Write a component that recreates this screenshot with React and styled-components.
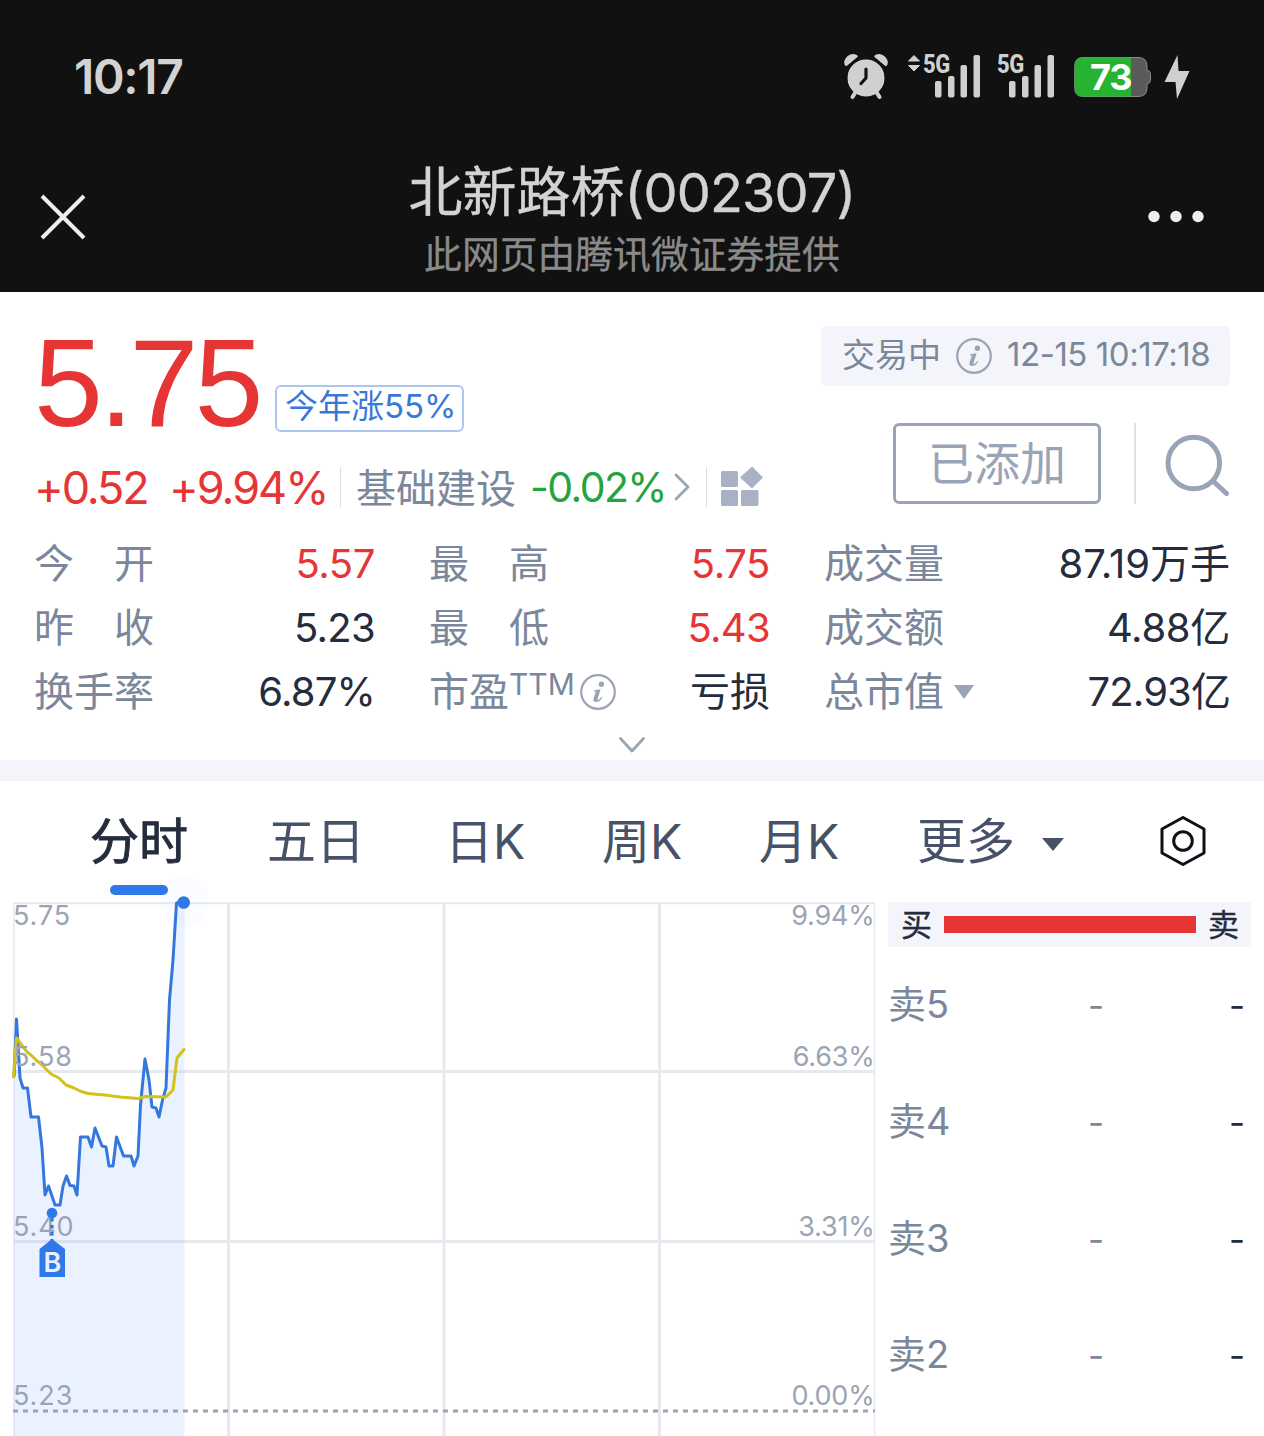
import React from 'react';
import styled, { createGlobalStyle } from 'styled-components';

const C = {
  dark: '#111111',
  ink: '#252c3d',
  label: '#7b879b',
  icon: '#9aa4b7',
  tab: '#475268',
  red: '#e63535',
  green: '#25a340',
  blue: '#2f78ea',
  tint: '#f4f5fa',
  grid: '#e8e9ee',
};

const GlobalStyle = createGlobalStyle`
  * { box-sizing: border-box; }
  body {
    margin: 0;
    background: #fff;
    font-family: Inter, 'Noto Sans CJK SC', sans-serif;
    -webkit-font-smoothing: antialiased;
  }
  svg { display: block; flex: none; }
`;

const Page = styled.div`
  width: 1264px;
  height: 1436px;
  overflow: hidden;
  background: #fff;
`;

const Text = styled.span`
  display: block;
  flex: none;
  box-sizing: content-box;
  white-space: pre;
  width: ${(p) => (p.$w ? `${p.$w}px` : 'auto')};
  margin-left: ${(p) => p.$ml || 0}px;
  padding-top: ${(p) => p.$pt || 0}px;
  padding-bottom: ${(p) => p.$pb || 0}px;
  font-size: ${(p) => p.$size}px;
  line-height: ${(p) => p.$lh || p.$size}px;
  font-weight: ${(p) => p.$weight || 400};
  letter-spacing: ${(p) => p.$ls || 0}px;
  color: ${(p) => p.$color || C.ink};
  -webkit-text-stroke: ${(p) => p.$stroke || 0}px currentColor;
`;

const Price = styled(Text)`
  font-family: 'Liberation Sans', Arial, sans-serif;
`;

const Code = styled.span`
  letter-spacing: -0.8px;
`;

/* ---------- dark header ---------- */
const DarkHeader = styled.header`
  height: 292px;
  background: ${C.dark};
`;
const StatusBar = styled.div`
  height: 152px;
  padding: 2px 74px 0;
  display: flex;
  align-items: center;
  justify-content: space-between;
`;
const NavBar = styled.div`
  height: 140px;
  padding: 0 58px 0 40px;
  display: flex;
  justify-content: space-between;
`;
const NavIcon = styled.div`
  width: 60px;
  padding-top: 42px;
`;
const Titles = styled.div`
  display: flex;
  flex-direction: column;
  align-items: center;
  padding: 11px 0 0 18px;
`;

/* ---------- quote panel ---------- */
const Quote = styled.section`
  height: 468px;
  padding: 0 34px;
`;
const QuoteTop = styled.div`
  height: 236px;
  display: flex;
  justify-content: space-between;
`;
const PriceCol = styled.div`
  padding-top: 30px;
`;
const PriceRow = styled.div`
  display: flex;
  height: 122px;
`;
const Tag = styled.div`
  width: 189px;
  height: 47px;
  margin-top: 63px;
  padding-left: 8px;
  border: 2px solid #abc6f0;
  border-radius: 6px;
`;
const ChangeRow = styled.div`
  display: flex;
  align-items: center;
  height: 86px;
`;
const Rule = styled.i`
  flex: none;
  width: ${(p) => p.$w || 1}px;
  height: ${(p) => p.$h}px;
  margin-left: ${(p) => p.$ml || 0}px;
  background: #dcdfe7;
`;
const Gap = styled.span`
  flex: none;
  width: ${(p) => p.$w}px;
`;
const ActionCol = styled.div`
  display: flex;
  flex-direction: column;
  align-items: flex-end;
  padding-top: 34px;
`;
const Session = styled.div`
  display: flex;
  align-items: center;
  width: 409px;
  height: 60px;
  padding-left: 21px;
  border-radius: 6px;
  background: ${C.tint};
`;
const Actions = styled.div`
  display: flex;
  align-items: center;
  margin-top: 37px;
`;
const Added = styled.button`
  width: 208px;
  height: 81px;
  padding: 0;
  display: flex;
  justify-content: center;
  align-items: center;
  background: transparent;
  border: 3px solid ${C.icon};
  border-radius: 6px;
  font-family: inherit;
`;
const Stats = styled.div`
  display: grid;
  grid-template-columns: 341px 341px 406px;
  column-gap: 54px;
  grid-auto-rows: 64px;
  padding-top: 4px;
`;
const Stat = styled.div`
  display: flex;
  align-items: center;
  justify-content: space-between;
`;
const StatLabel = styled.div`
  display: flex;
  align-items: center;
`;
const Expand = styled.div`
  display: flex;
  justify-content: center;
  padding-top: 12px;
`;
const Divider = styled.div`
  height: 21px;
  background: ${C.tint};
`;

/* ---------- tabs ---------- */
const Tabs = styled.nav`
  display: grid;
  grid-template-columns: 177px 178px 157px 157px 158px 243px auto;
  height: 121px;
  padding: 35px 0 0 90px;
`;
const Tab = styled.div`
  display: flex;
  flex-direction: column;
  align-items: flex-start;
`;
const Underline = styled.i`
  width: 58px;
  height: 10px;
  margin: 18px 0 0 20px;
  border-radius: 5px;
  background: ${C.blue};
`;
const MoreTab = styled.div`
  display: flex;
  align-items: flex-start;
`;

/* ---------- chart and order book ---------- */
const Market = styled.section`
  display: flex;
  height: 534px;
  padding-left: 13px;
`;
const ChartSvg = styled.svg`
  overflow: visible;
  font-family: Inter, sans-serif;
`;
const Book = styled.aside`
  width: 363px;
  margin-left: 13px;
`;
const BookHead = styled.div`
  height: 45px;
  margin-bottom: -1px;
  display: flex;
  align-items: center;
  padding-left: 13px;
  background: ${C.tint};
`;
const Ratio = styled.i`
  width: 252px;
  height: 17px;
  margin: 0 12px;
  background: ${C.red};
`;
const BookRow = styled.div`
  display: flex;
  align-items: center;
  height: 116.7px;
`;

const InfoIcon = () => (
  <svg width="36" height="36" viewBox="0 0 36 36">
    <circle cx="18" cy="18" r="16.8" fill="none" stroke={C.icon} strokeWidth="2.2" />
    <circle cx="21.4" cy="10.2" r="2.7" fill={C.icon} />
    <path d="M14 16.3 L20.6 15.2 L17.6 25 Q17.2 26.5 18.6 25.8 Q20.2 24.8 21.6 22.8 L22.4 23.4 Q19.6 28 15.8 28 Q12.6 27.8 13.5 24.6 L15.6 18.4 Q16 17 14 17.2 Z" fill={C.icon} />
  </svg>
);

const SignalBox = styled.div`
  display: flex;
  align-items: flex-start;
  width: ${(p) => p.$w}px;
  height: 46px;
`;
const Arrows = styled.div`
  width: 16px;
  flex: none;
`;
const Network = styled.span`
  flex: none;
  width: 27px;
  padding-top: 1px;
  font: 800 25px/20px Roboto, sans-serif;
  letter-spacing: -0.5px;
  color: #d0d0d0;
  transform: scaleX(0.88);
  transform-origin: 0 0;
`;
const Bars = styled.svg`
  margin-left: -15.5px;
`;

const Signal = ({ arrows, width }) => (
  <SignalBox $w={width}>
    <Arrows>
      {arrows && (
        <svg width="14" height="20" viewBox="0 0 14 20">
          <path d="M1.500 7 L7 1.500 L12.500 7 Z M1.500 11.500 L7 17 L12.500 11.500 Z" fill="#d0d0d0" stroke="#d0d0d0" strokeLinejoin="round" />
        </svg>
      )}
    </Arrows>
    <Network>5G</Network>
    <Bars width="46" height="46" viewBox="0 0 46 46" fill="#d0d0d0">
      <rect x="0" y="27" width="6.500" height="16.500" rx="2" />
      <rect x="13" y="22" width="6.500" height="21.500" rx="2" />
      <rect x="25.500" y="11" width="6.500" height="32.500" rx="2" />
      <rect x="38.500" y="1" width="6.500" height="42.500" rx="2" />
    </Bars>
  </SignalBox>
);

const StatusIcons = styled.div`
  display: flex;
  align-items: center;
`;
const Battery = styled.div`
  display: grid;
  width: 80px;
  height: 42px;
  > * { grid-area: 1 / 1; }
`;

const Status = () => (
  <StatusBar>
    <Text $size={48} $weight={600} $color="#d3d3d3" $ls={-1.3}>10:17</Text>
    <StatusIcons>
      <svg width="44" height="46" viewBox="0 0 44 46">
        <g fill="#d0d0d0">
          <circle cx="22" cy="24" r="18.700" />
          <path d="M2.200 11.300 Q.3 10 1.300 6.500 Q4 1 9 .8 Q12.500 1 13 2.500 L2.200 11.300 Z" stroke="#d0d0d0" strokeWidth="1.500" strokeLinejoin="round" />
          <path d="M41.800 11.300 Q43.700 10 42.700 6.500 Q40 1 35 .8 Q31.500 1 31 2.500 L41.800 11.300 Z" stroke="#d0d0d0" strokeWidth="1.500" strokeLinejoin="round" />
        </g>
        <circle cx="22" cy="24" r="19.700" fill="none" stroke={C.dark} strokeWidth="2" />
        <path d="M11 39 L8.500 43 M33 39 L35.500 43" stroke="#d0d0d0" strokeWidth="4" strokeLinecap="round" />
        <path d="M22 15 V24 L17 29.500" fill="none" stroke={C.dark} strokeWidth="3.200" strokeLinecap="round" strokeLinejoin="round" />
      </svg>
      <Gap $w={19} />
      <Signal arrows width={74} />
      <Signal width={76} />
      <Gap $w={17} />
      <Battery>
        <svg width="80" height="42" viewBox="0 0 80 42">
          <path d="M9 1.500 H64 Q73 1.500 73 10 V14 Q76.500 15 76.500 17.500 V24.500 Q76.500 27 73 28 V32 Q73 40.500 64 40.500 H9 Q.7 40.500 .7 32 V10 Q.7 1.500 9 1.500 Z" fill="#5b5b5b" stroke="#8a8a8a" />
          <path d="M9 1.500 H57 V40.500 H9 Q.7 40.500 .7 32 V10 Q.7 1.500 9 1.500 Z" fill="#27b332" />
        </svg>
        <Text $size={36} $lh={43} $weight={700} $color="#fff" $ml={16} $ls={-1}>73</Text>
      </Battery>
      <Gap $w={10} />
      <svg width="26" height="46" viewBox="0 0 26 46">
        <path d="M13.500 1 L.5 28 H11.500 L13 45 L25.500 17 H14.500 Z" fill="#d0d0d0" />
      </svg>
    </StatusIcons>
  </StatusBar>
);

const STATS = [
  ['今\u3000开', '5.57', C.red, -0.4],
  ['最\u3000高', '5.75', C.red, -0.4],
  ['成交量', '87.19万手', C.ink, 0],
  ['昨\u3000收', '5.23', C.ink, -0.7],
  ['最\u3000低', '5.43', C.red, -0.7],
  ['成交额', '4.88亿', C.ink, -0.3],
  ['换手率', '6.87%', C.ink, -0.8],
  ['市盈', '亏损', C.ink, 0, 'ttm'],
  ['总市值', '72.93亿', C.ink, -0.9, 'menu'],
];

const PRICE = [[14,1077],[16.5,1019],[20,1078],[23,1088],[27.5,1088],[31,1117],[38.5,1117],[42,1148],[45,1195],[48.5,1186],[55,1205],[60,1205],[63,1186],[66.5,1176],[70,1185.5],[74,1186],[77,1195],[80.5,1137],[88,1137],[91.5,1147],[95,1128],[102,1146],[106,1147],[109,1166],[113,1166],[116.5,1137],[123.5,1156],[131,1156],[134,1166],[138,1156],[140.5,1105],[145,1059],[149,1080],[152,1107],[156,1108],[159,1117],[162.5,1100],[166,1088],[169.5,1000],[173,960],[176.5,903],[183.5,902]];
const AVERAGE = [[13.5,1077],[16.5,1038],[21,1044],[27,1052],[31,1055],[36,1060],[41,1064],[51,1074],[59,1078],[66,1085],[74,1088],[81,1091.5],[88,1093.5],[105,1095],[120,1097],[138,1098.5],[145,1096.5],[166,1097],[173,1090],[177,1058],[184,1049.5]];
const line = (pts) => pts.map((p) => p.join(',')).join(' ');

const AXIS = [
  [925, '5.75', '9.94%'],
  [1066, '5.58', '6.63%'],
  [1236, '5.40', '3.31%'],
  [1405, '5.23', '0.00%'],
];

const Chart = () => (
  <ChartSvg width="862" height="534" viewBox="13 902 862 534">
    <g stroke={C.grid} strokeWidth="3">
      <path d="M13 903.200 H875" strokeWidth="2" />
      <path d="M14 903 V1436 M874.500 903 V1436" strokeWidth="1.500" />
      <path d="M13 1071.500 H875 M13 1241.500 H875 M228.500 903 V1436 M444 903 V1436 M659.500 903 V1436" />
    </g>
    <polygon points={`14,1436 ${line(PRICE)} 184.5,902 184.5,1436`} fill="rgba(47,120,255,.095)" />
    <path d="M13 1411 H875" stroke="#9aa3b5" strokeWidth="3" strokeDasharray="5 5" />
    <polyline points={line(PRICE)} fill="none" stroke="#3478dc" strokeWidth="3" strokeLinejoin="round" />
    <polyline points={line(AVERAGE)} fill="none" stroke="#d2c31b" strokeWidth="3" strokeLinejoin="round" strokeLinecap="round" />
    <g fill="#9ba4b4" fontSize="27">
      {AXIS.map(([y, price, pct]) => (
        <React.Fragment key={y}>
          <text x="13" y={y} letterSpacing="0.9">{price}</text>
          <text x="874.500" y={y} textAnchor="end" letterSpacing="-0.2">{pct}</text>
        </React.Fragment>
      ))}
    </g>
    <circle cx="184" cy="902.500" r="25" fill="rgba(47,120,255,.022)" />
    <circle cx="183.700" cy="902.500" r="6.300" fill={C.blue} />
    <circle cx="52" cy="1213" r="5.300" fill={C.blue} />
    <path d="M52 1218 V1240" stroke={C.blue} strokeWidth="3.200" strokeDasharray="3.500 3.500" />
    <path d="M39.500 1249 L52 1239 L65 1249 V1277 H39.500 Z" fill={C.blue} />
    <text x="52.500" y="1271.500" textAnchor="middle" fill="#e9f1ff" fontSize="27" fontWeight="600">B</text>
  </ChartSvg>
);

export default function App() {
  return (
    <Page>
      <GlobalStyle />
      <DarkHeader>
        <Status />
        <NavBar>
          <NavIcon>
            <svg width="46" height="46" viewBox="0 0 46 46">
              <path d="M2 2 L44 44 M44 2 L2 44" stroke="#eee" strokeWidth="4" />
            </svg>
          </NavIcon>
          <Titles>
            <Text $size={54} $lh={60} $color="#d3d3d3" $stroke={0.4}>北新路桥<Code>(002307)</Code></Text>
            <Text $size={37.8} $lh={62} $color="#8a8a8a" $stroke={0.3}>此网页由腾讯微证券提供</Text>
          </Titles>
          <NavIcon>
            <svg width="60" height="46" viewBox="0 0 60 46" fill="#eee">
              <circle cx="8" cy="22.500" r="5.700" />
              <circle cx="30" cy="22.500" r="5.700" />
              <circle cx="52" cy="22.500" r="5.700" />
            </svg>
          </NavIcon>
        </NavBar>
      </DarkHeader>

      <Quote>
        <QuoteTop>
          <PriceCol>
            <PriceRow>
              <Price $w={241} $size={124} $lh={122} $ls={-4} $color={C.red}>5.75</Price>
              <Tag>
                <Text $size={33} $lh={38} $color="#3a78d8">今年涨55%</Text>
              </Tag>
            </PriceRow>
            <ChangeRow>
              <Text $w={135} $size={45} $ls={-2.1} $color={C.red}>+0.52</Text>
              <Text $w={171} $size={45} $ls={-2} $color={C.red}>+9.94%</Text>
              <Rule $h={41} />
              <Text $ml={15} $w={174} $size={40} $pt={3} $color={C.label}>基础建设</Text>
              <Text $w={144} $size={41} $ls={-1.6} $color={C.green}>-0.02%</Text>
              <svg width="16" height="30" viewBox="0 0 16 30">
                <path d="M2 3 L14 15 L2 27" fill="none" stroke={C.icon} strokeWidth="2.800" strokeLinecap="round" strokeLinejoin="round" />
              </svg>
              <Rule $h={41} $ml={16} />
              <Gap $w={14} />
              <svg width="43" height="42" viewBox="0 0 43 42" fill="#a9b2c4">
                <rect x="0" y="5" width="17" height="16" rx="1.500" />
                <rect x="0" y="24" width="17" height="16" rx="1.500" />
                <rect x="20" y="24" width="17.500" height="16" rx="1.500" />
                <path d="M31 1.500 L41 11.500 L31 21.500 L20 11.500 Z" stroke="#a9b2c4" strokeWidth="1.500" strokeLinejoin="round" />
              </svg>
            </ChangeRow>
          </PriceCol>
          <ActionCol>
            <Session>
              <Text $w={114} $size={33} $pb={2} $color={C.label}>交易中</Text>
              <InfoIcon />
              <Text $ml={15} $size={33} $pb={3} $ls={-0.45} $color={C.label}>12-15 10:17:18</Text>
            </Session>
            <Actions>
              <Added>
                <Text $size={46} $pb={2} $color={C.icon}>已添加</Text>
              </Added>
              <Rule $h={81} $w={2} $ml={33} />
              <Gap $w={28} />
              <svg width="66" height="64" viewBox="0 0 66 64" fill="none" stroke={C.icon} strokeWidth="5">
                <circle cx="29.800" cy="31" r="25.800" />
                <path d="M49 49 L62.500 61.500" strokeLinecap="round" />
              </svg>
            </Actions>
          </ActionCol>
        </QuoteTop>

        <Stats>
          {STATS.map(([label, value, color, spacing, extra]) => (
            <Stat key={label}>
              <StatLabel>
                <Text $size={40} $color={C.label}>{label}</Text>
                {extra === 'ttm' && (
                  <>
                    <Text $size={30} $w={71} $pb={16} $color={C.label}>TTM</Text>
                    <InfoIcon />
                  </>
                )}
                {extra === 'menu' && (
                  <>
                    <Gap $w={9} />
                    <svg width="22" height="16" viewBox="0 0 22 16">
                      <path d="M1 1 H21 L11 15 Z" fill={C.icon} />
                    </svg>
                  </>
                )}
              </StatLabel>
              <Text $size={40} $color={color} $ls={spacing}>{value}</Text>
            </Stat>
          ))}
        </Stats>
        <Expand>
          <svg width="28" height="18" viewBox="0 0 28 18">
            <path d="M2.500 2.500 L14 15 L25.500 2.500" fill="none" stroke={C.icon} strokeWidth="2.800" strokeLinecap="round" strokeLinejoin="round" />
          </svg>
        </Expand>
      </Quote>
      <Divider />

      <Tabs>
        <Tab>
          <Text $size={49} $lh={50} $pt={1} $stroke={0.9}>分时</Text>
          <Underline />
        </Tab>
        <Tab>
          <Text $size={49} $lh={50} $pt={1} $color={C.tab}>五日</Text>
        </Tab>
        {['日K', '周K', '月K'].map((name) => (
          <Tab key={name}>
            <Text $size={48} $lh={50} $pt={1} $color={C.tab}>{name}</Text>
          </Tab>
        ))}
        <MoreTab>
          <Text $size={49} $lh={50} $pt={1} $w={125} $color={C.tab}>更多</Text>
          <svg width="22" height="40" viewBox="0 0 22 40">
            <path d="M0 22 H22 L11 35 Z" fill={C.tab} />
          </svg>
        </MoreTab>
        <svg width="46" height="50" viewBox="0 0 46 50" fill="none" stroke="#0e1118" strokeWidth="3" strokeLinejoin="round">
          <path d="M23 1.500 L44 13 V37 L23 48.500 L2 37 V13 Z" />
          <circle cx="23" cy="25" r="9.300" />
        </svg>
      </Tabs>

      <Market>
        <Chart />
        <Book>
          <BookHead>
            <Text $size={31} $stroke={0.4}>买</Text>
            <Ratio />
            <Text $size={31} $stroke={0.4}>卖</Text>
          </BookHead>
          {[5, 4, 3, 2].map((n) => (
            <BookRow key={n}>
              <Text $w={200} $size={38} $color={C.label}>{`卖${n}`}</Text>
              <Text $w={141} $size={35} $pt={3} $color={C.label}>-</Text>
              <Text $size={35} $pt={3}>-</Text>
            </BookRow>
          ))}
        </Book>
      </Market>
    </Page>
  );
}
